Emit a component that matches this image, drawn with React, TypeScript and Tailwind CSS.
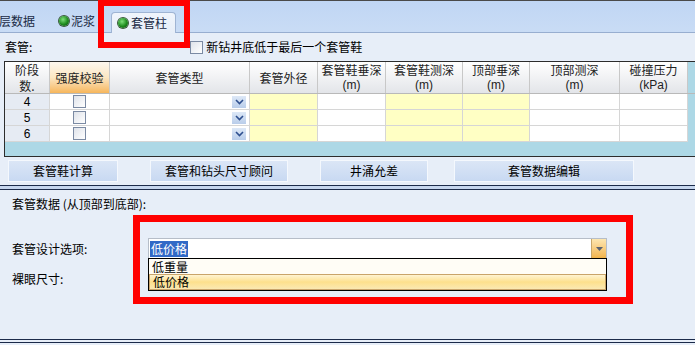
import type { ReactNode } from "react";

const latin = "font-['Liberation_Sans',sans-serif]";

const cols = [
  { w: "w-[45px]", top: "阶段", sub: "数.", kind: "num" },
  { w: "w-[60px]", top: "强度校验", sub: "", kind: "check" },
  { w: "w-[140px]", top: "套管类型", sub: "", kind: "combo" },
  { w: "w-[68px]", top: "套管外径", sub: "", kind: "yellow" },
  { w: "w-[68px]", top: "套管鞋垂深", sub: "(m)", kind: "white" },
  { w: "w-[77px]", top: "套管鞋测深", sub: "(m)", kind: "yellow" },
  { w: "w-[67px]", top: "顶部垂深", sub: "(m)", kind: "yellow" },
  { w: "w-[90px]", top: "顶部测深", sub: "(m)", kind: "white" },
  { w: "w-[68px]", top: "碰撞压力", sub: "(kPa)", kind: "white" },
];

const rows = ["4", "5", "6"];

function Dot() {
  return (
    <span className="inline-block w-[10px] h-[10px] rounded-full bg-[radial-gradient(circle_at_40%_35%,#7ee07a,#1d8a1d_55%,#0b4d0b)] ring-1 ring-[#3a5a3a]" />
  );
}

function Check() {
  return (
    <span className="inline-block w-[13px] h-[13px] border border-[#7b8aa3] bg-gradient-to-br from-[#dfe3ea] to-white" />
  );
}

function Cell({ kind, n }: { kind: string; n: string }) {
  if (kind === "num")
    return <div className={`h-full bg-[#e6ebf3] flex items-center justify-center ${latin}`}>{n}</div>;
  if (kind === "check")
    return (
      <div className="h-full bg-white flex items-center justify-center">
        <Check />
      </div>
    );
  if (kind === "combo")
    return (
      <div className="h-full bg-white flex items-center justify-end pr-[3px]">
        <span className="w-[14px] h-[12px] bg-gradient-to-b from-[#dde8f7] to-[#b9cdea] flex items-center justify-center">
          <svg width="9" height="6" viewBox="0 0 9 6">
            <path d="M1 1 L4.5 4.5 L8 1" stroke="#2e4f8f" strokeWidth="1.6" fill="none" />
          </svg>
        </span>
      </div>
    );
  if (kind === "yellow") return <div className="h-full bg-[#ffffc4]" />;
  return <div className="h-full bg-white" />;
}

function Btn({ children, cls }: { children: ReactNode; cls: string }) {
  return (
    <div
      className={`${cls} h-[22px] flex items-center justify-center border border-[#f4f8fd] bg-gradient-to-b from-[#dbe6f6] to-[#c8d9f2]`}
    >
      {children}
    </div>
  );
}

export default function App() {
  return (
    <div
      className="relative w-[695px] h-[345px] overflow-hidden bg-[#e7eef8] text-[12px] leading-[14px] text-black"
      style={{ fontFamily: '"Noto Sans CJK SC", "Liberation Sans", sans-serif' }}
    >
      {/* tab strip */}
      <div className="h-px bg-[#4a4a4a]" />
      <div className="h-[32px] bg-gradient-to-b from-[#c0d6f4] to-[#c9dcf5] border-b border-[#98aed0] flex items-end">
        <div className="h-[31px] flex items-center pt-[9px]">
          <span className="ml-[-1px] text-[#1a2a44]">层数据</span>
          <span className="ml-[24px] flex items-center gap-[2px]">
            <Dot />
            <span className="text-[#1a2a44]">泥浆</span>
          </span>
        </div>
        <div className="ml-[16px] w-[65px] h-[21px] mb-[-1px] rounded-t-[4px] border border-b-0 border-[#9fb4d3] bg-gradient-to-b from-[#f0f5fc] to-[#e7eef8] flex items-center pl-[6px] gap-[3px]">
          <Dot />
          <span className="text-[#1a2a44]">套管柱</span>
        </div>
      </div>

      {/* casing label row */}
      <div className="h-[28px] flex items-center">
        <span className="ml-[5px]">套管:</span>
        <span className="ml-[158px] flex items-center gap-[3px]">
          <Check />
          <span>新钻井底低于最后一个套管鞋</span>
        </span>
      </div>

      {/* grid */}
      <div className="ml-[4px] border-l border-t border-b border-[#2c2c2c] bg-[#add8e6] h-[96px]">
        <div className="flex h-[32px] border-b border-[#b9b9b9]">
          {cols.map((c, i) => (
            <div
              key={i}
              className={`${c.w} shrink-0 border-r border-[#c8c8c8] text-center text-[#222] flex flex-col ${
                i === 1
                  ? "bg-gradient-to-b from-[#fdf7ee] via-[#fbe6c2] to-[#f6b65a]"
                  : "bg-gradient-to-b from-white to-[#e3e5e9]"
              } ${c.sub ? "" : "justify-center"}`}
            >
              {c.sub ? (
                <>
                  <div className={i === 0 ? "leading-[17px] h-[16px] mt-[-1px]" : "leading-[16px] h-[15px]"}>
                    {c.top}
                  </div>
                  <div className={i === 0 ? "leading-[17px] h-[16px]" : `leading-[14px] mt-[1px] ${latin}`}>
                    {c.sub}
                  </div>
                </>
              ) : (
                <div>{c.top}</div>
              )}
            </div>
          ))}
        </div>
        {rows.map((n) => (
          <div key={n} className="flex h-[16px]">
            {cols.map((c, i) => (
              <div key={i} className={`${c.w} shrink-0 border-r border-b border-[#d6d6d6]`}>
                <Cell kind={c.kind} n={n} />
              </div>
            ))}
          </div>
        ))}
      </div>

      {/* buttons */}
      <div className="h-[28px] flex items-center">
        <Btn cls="ml-[8px] w-[110px]">套管鞋计算</Btn>
        <Btn cls="ml-[32px] w-[138px]">套管和钻头尺寸顾问</Btn>
        <Btn cls="ml-[32px] w-[108px]">井涌允差</Btn>
        <Btn cls="ml-[26px] w-[180px]">套管数据编辑</Btn>
      </div>
      <div className="h-[5px] border-t border-b border-[#1c2b4a] bg-[#c6d6ee]" />

      {/* lower form */}
      <div className="pl-[12px] pt-[7px] h-[149px] relative">
        <div>套管数据 (从顶部到底部):</div>
        <div className="mt-[27px] flex items-center h-[21px]">
          <span className="w-[136px]">套管设计选项:</span>
          <div className="w-[459px] h-[21px] flex border border-[#b6bdc8] bg-white">
            <div className="flex-1 flex items-center pl-[1px]">
              <span className="bg-[#3169c6] text-white px-[1px] leading-[16px]">低价格</span>
            </div>
            <div className="w-[15px] bg-gradient-to-b from-[#fce6b0] to-[#f2b44c] border-l border-[#c9a76a] flex items-center justify-center">
              <svg width="7" height="4" viewBox="0 0 7 4">
                <path d="M0 0 H7 L3.5 4 Z" fill="#5a6270" />
              </svg>
            </div>
          </div>
        </div>
        <div className="mt-[13px]">裸眼尺寸:</div>

        {/* open dropdown list */}
        <div className="absolute left-[148px] top-[68px] w-[459px] h-[33px] border border-black bg-[#fffdf6]">
          <div className="h-[15px] flex items-center pl-[3px]">低重量</div>
          <div className="h-[16px] flex items-center pl-[3px] border border-[#c9a46a] bg-gradient-to-b from-[#fff4d2] via-[#fde08c] to-[#fbe9b2]">
            低价格
          </div>
        </div>
      </div>

      <div className="h-[4px] border-t border-b border-[#1c2b4a] bg-[#e7eef8]" />

      {/* annotation boxes */}
      <div className="absolute left-[98px] top-0 w-[92px] h-[48px] border-[6px] border-[#ff0000]" />
      <div className="absolute left-[133px] top-[215px] w-[500px] h-[89px] border-[7px] border-[#ff0000]" />
    </div>
  );
}
